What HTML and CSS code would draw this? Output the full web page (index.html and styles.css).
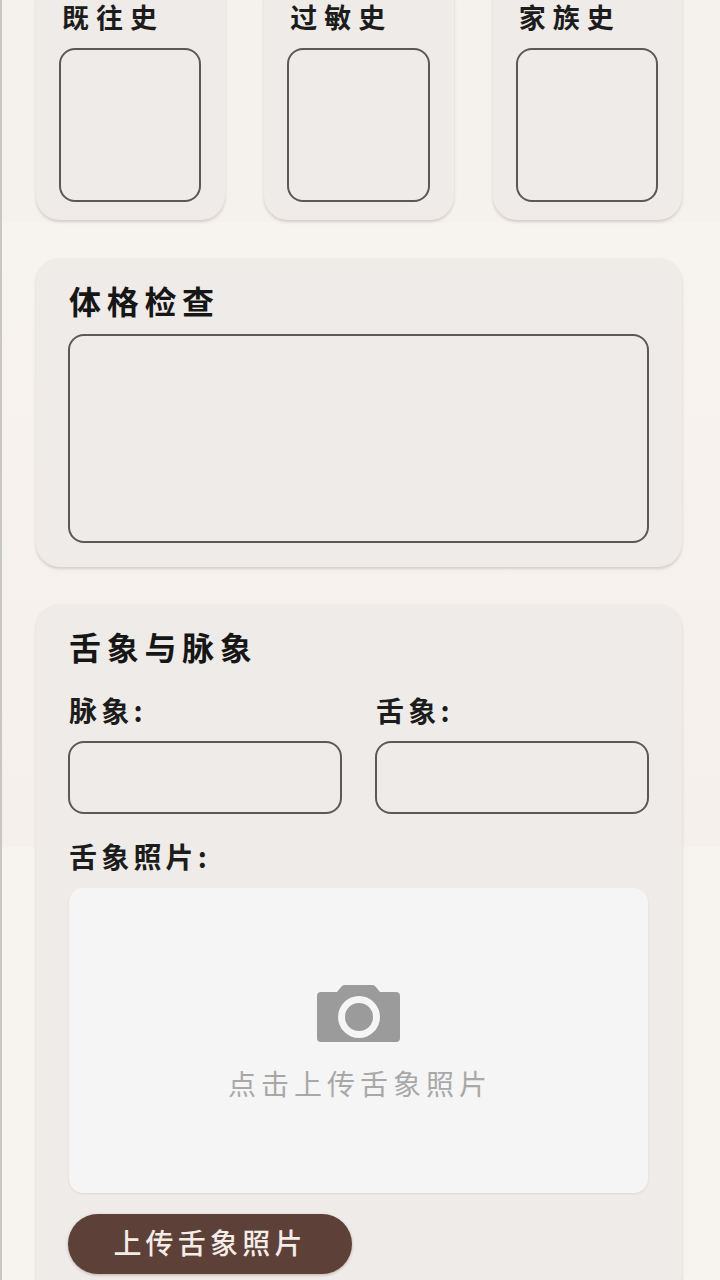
FILE: index.html
```html
<!DOCTYPE html>
<html lang="zh-CN">
<head>
    <meta charset="UTF-8">
    <meta name="viewport" content="width=device-width, initial-scale=1.0">
    <title>病历录入</title>
    <link rel="stylesheet" href="styles.css">
</head>
<body>
    <div class="page">
        <div class="history-row">
            <div class="card history-card">
                <label class="history-label">既往史</label>
                <textarea class="field history-field"></textarea>
            </div>
            <div class="card history-card">
                <label class="history-label">过敏史</label>
                <textarea class="field history-field"></textarea>
            </div>
            <div class="card history-card">
                <label class="history-label">家族史</label>
                <textarea class="field history-field"></textarea>
            </div>
        </div>

        <div class="card section-card">
            <h2 class="section-title exam-title">体格检查</h2>
            <textarea class="field exam-field"></textarea>
        </div>

        <div class="card section-card">
            <h2 class="section-title">舌象与脉象</h2>
            <div class="pulse-row">
                <div class="form-group">
                    <label class="form-label">脉象:</label>
                    <input type="text" class="field pulse-field">
                </div>
                <div class="form-group">
                    <label class="form-label">舌象:</label>
                    <input type="text" class="field pulse-field">
                </div>
            </div>
            <label class="form-label photo-label">舌象照片:</label>
            <div class="upload-box">
                <svg class="camera-icon" viewBox="0 0 83 57" width="83" height="57">
                    <path fill="#9b9b9b" fill-rule="evenodd" d="M4 7h16l5-6q1-1 3-1h27q2 0 3 1l5 6h16a4 4 0 0 1 4 4v42a4 4 0 0 1-4 4H4a4 4 0 0 1-4-4V11a4 4 0 0 1 4-4zM42 11a21 21 0 1 0 0 42a21 21 0 1 0 0-42zM42 18a14 14 0 1 1 0 28a14 14 0 1 1 0-28z"/>
                </svg>
                <span class="upload-hint">点击上传舌象照片</span>
            </div>
            <button type="button" class="upload-button">上传舌象照片</button>
        </div>
    </div>
</body>
</html>
```

FILE: styles.css
```css
* {
    margin: 0;
    padding: 0;
    box-sizing: border-box;
    font-family: "Noto Sans CJK SC", "Noto Sans", sans-serif;
}

html, body {
    height: 1280px;
    overflow: hidden;
}

body {
    background: linear-gradient(#f5f1ed 0, #f5f1ed 222px, #f7f3ef 222px, #f5f0ec 847px, #f7f3ef 847px);
    border-left: 2px solid #c9c7c5;
}

.page {
    margin-top: -24px;
    padding: 0 38px 0 34px;
}

.card {
    background: #efebe8;
    border-radius: 24px;
    box-shadow: 0 2px 3px rgba(90,80,70,0.22);
}

.history-row {
    display: grid;
    grid-template-columns: repeat(3, 1fr);
    gap: 39px;
    margin-bottom: 38px;
}

.history-card {
    padding: 24px 24px 18px 23px;
}

.history-label {
    display: block;
    padding-left: 3px;
    margin-bottom: 14px;
    font-size: 27px;
    line-height: 34px;
    font-weight: 700;
    letter-spacing: 7px;
    color: #1c1c1c;
    white-space: nowrap;
}

.field {
    display: block;
    width: 100%;
    background: #efebe8;
    border: 2px solid #5b5956;
    border-radius: 16px;
    outline: none;
    resize: none;
}

.history-field {
    height: 154px;
}

.section-card {
    padding: 24px 33px 24px 32px;
    margin-bottom: 37px;
}

.section-title {
    padding-left: 1px;
    font-size: 32px;
    line-height: 36px;
    font-weight: 700;
    letter-spacing: 5.7px;
    color: #161616;
    white-space: nowrap;
}

.exam-title {
    margin-bottom: 16px;
}

.exam-field {
    height: 209px;
}

.pulse-row {
    display: grid;
    grid-template-columns: 1fr 1fr;
    gap: 33px;
    margin-top: 30px;
}

.form-label {
    display: block;
    margin-bottom: 15px;
    padding-left: 1px;
    font-size: 28px;
    line-height: 32px;
    font-weight: 700;
    letter-spacing: 4.2px;
    color: #1c1c1c;
    white-space: nowrap;
}

.pulse-field {
    height: 73px;
}

.photo-label {
    margin-top: 26px;
    margin-bottom: 16px;
}

.upload-box {
    display: flex;
    flex-direction: column;
    align-items: center;
    height: 305px;
    margin: 0 1px;
    padding-top: 97px;
    background: #f5f5f5;
    border-radius: 14px;
    box-shadow: 0 1px 2px rgba(90,80,70,0.12);
}

.upload-hint {
    margin-top: 23px;
    margin-right: -3px;
    font-size: 28px;
    line-height: 36px;
    letter-spacing: 5px;
    color: #a8a8a8;
}

.upload-button {
    display: block;
    width: 284px;
    height: 60px;
    margin-top: 21px;
    padding-bottom: 4px;
    background: #5d4037;
    color: #f3ece8;
    border: none;
    border-radius: 30px;
    font-size: 28px;
    font-weight: 500;
    letter-spacing: 4.2px;
    box-shadow: 0 1px 3px rgba(60,40,30,0.3);
}
```
